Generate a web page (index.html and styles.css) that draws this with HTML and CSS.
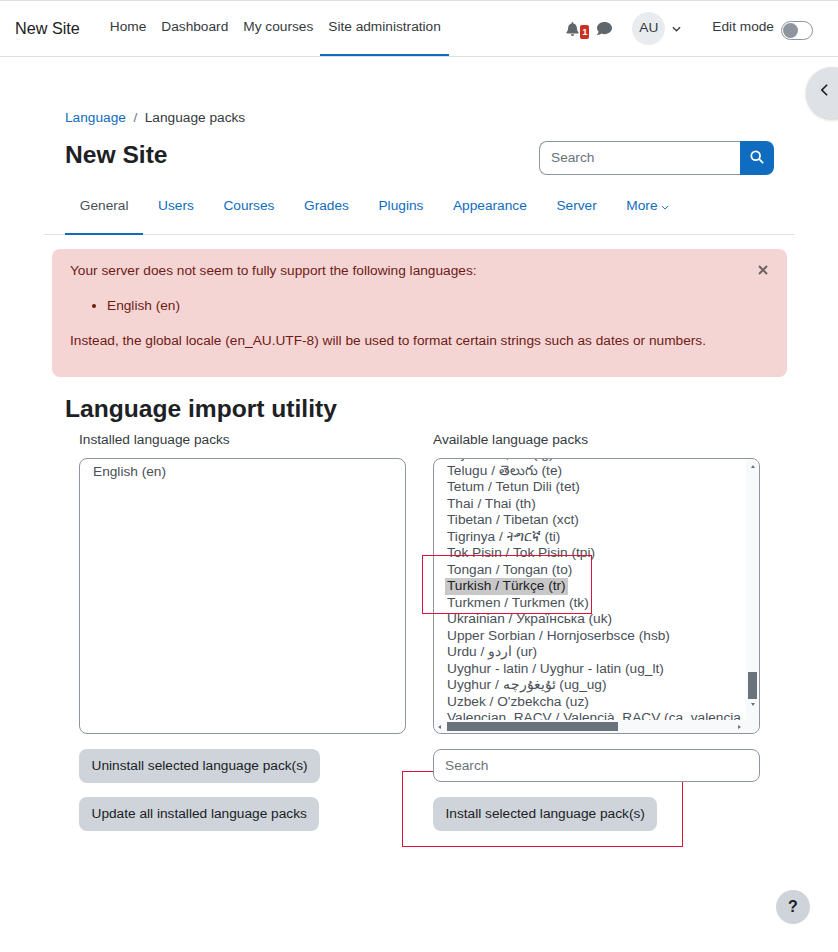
FILE: index.html
```html
<!DOCTYPE html>
<html lang="en">
<head>
  <meta charset="UTF-8">
  <meta name="viewport" content="width=device-width, initial-scale=1.0">
  <title>New Site: Language packs</title>
  <link rel="stylesheet" href="styles.css">
</head>
<body>
  <nav class="navbar">
    <a class="brand">New Site</a>
    <ul class="primary-nav">
      <li><a>Home</a></li>
      <li><a>Dashboard</a></li>
      <li><a>My courses</a></li>
      <li class="active"><a>Site administration</a></li>
    </ul>
    <div class="user-nav">
      <span class="icon-bell">
        <svg viewBox="0 0 448 512" width="13" height="14"><path fill="#5f666c" d="M224 512c35.32 0 63.97-28.65 63.97-64H160.03c0 35.35 28.65 64 63.97 64zm215.39-149.71c-19.32-20.76-55.47-51.99-55.47-154.29 0-77.7-54.48-139.9-127.94-155.16V32c0-17.67-14.32-32-31.98-32s-31.98 14.33-31.98 32v20.84C118.56 68.1 64.08 130.3 64.08 208c0 102.3-36.15 133.53-55.47 154.29-6 6.45-8.66 14.16-8.61 21.71.11 16.4 12.98 32 32.1 32h383.8c19.12 0 32-15.6 32.1-32 .05-7.55-2.61-15.27-8.61-21.71z"/></svg>
        <span class="badge">1</span>
      </span>
      <svg class="icon-msg" viewBox="0 0 512 512" width="15" height="15"><path fill="#5f666c" d="M256 32C114.6 32 0 125.1 0 240c0 49.6 21.4 95 57 130.7C44.5 421.1 2.7 466 2.2 466.5c-2.2 2.3-2.8 5.7-1.5 8.7S4.8 480 8 480c66.3 0 116-31.8 140.6-51.4 32.7 12.3 69 19.4 107.4 19.4 141.4 0 256-93.1 256-208S397.4 32 256 32z"/></svg>
      <span class="avatar">AU</span>
      <svg class="icon-caret" viewBox="0 0 10 6" width="9" height="6"><path d="M1 1l4 4 4-4" fill="none" stroke="#343a40" stroke-width="1.4"/></svg>
      <span class="edit-label">Edit mode</span>
      <span class="toggle"><span class="knob"></span></span>
    </div>
  </nav>

  <button class="drawer-toggle">
    <svg viewBox="0 0 10 16" width="9" height="14"><path d="M8 2L2 8l6 6" fill="none" stroke="#1d2125" stroke-width="2"/></svg>
  </button>

  <main class="page">
    <ol class="breadcrumb">
      <li><a>Language</a></li>
      <li class="sep">/</li>
      <li>Language packs</li>
    </ol>

    <div class="page-head">
      <h2>New Site</h2>
      <form class="search-group">
        <input class="search-input" placeholder="Search">
        <button class="search-btn" type="button">
          <svg viewBox="0 0 16 16" width="14" height="14"><circle cx="6.5" cy="6.5" r="5" fill="none" stroke="#fff" stroke-width="2"/><path d="M10.5 10.5L15 15" stroke="#fff" stroke-width="2"/></svg>
        </button>
      </form>
    </div>

    <ul class="tabs">
      <li class="active"><a>General</a></li>
      <li><a>Users</a></li>
      <li><a>Courses</a></li>
      <li><a>Grades</a></li>
      <li><a>Plugins</a></li>
      <li><a>Appearance</a></li>
      <li><a>Server</a></li>
      <li><a>More <svg viewBox="0 0 10 6" width="8" height="5"><path d="M1 1l4 4 4-4" fill="none" stroke="#0f6cbf" stroke-width="1.2"/></svg></a></li>
    </ul>

    <div class="alert">
      <svg class="alert-close" viewBox="0 0 10 10" width="10" height="10"><path d="M1 1l8 8M9 1l-8 8" stroke="#6c6566" stroke-width="2"/></svg>
      <p>Your server does not seem to fully support the following languages:</p>
      <ul>
        <li>English (en)</li>
      </ul>
      <p>Instead, the global locale (en_AU.UTF-8) will be used to format certain strings such as dates or numbers.</p>
    </div>

    <h2 class="section-title">Language import utility</h2>

    <div class="import-grid">
      <div class="col">
        <label>Installed language packs</label>
        <div class="listbox">
          <div class="options options-plain">
            <div class="option">English (en)</div>
          </div>
        </div>
        <button class="btn">Uninstall selected language pack(s)</button>
        <button class="btn">Update all installed language packs</button>
      </div>

      <div class="col">
        <label>Available language packs</label>
        <div class="listbox listbox-scroll">
          <div class="options">
            <div class="options-inner">
              <div class="option">Tajik / Тоҷикӣ (tg)</div>
              <div class="option">Telugu / తెలుగు (te)</div>
              <div class="option">Tetum / Tetun Dili (tet)</div>
              <div class="option">Thai / Thai (th)</div>
              <div class="option">Tibetan / Tibetan (xct)</div>
              <div class="option">Tigrinya / ትግርኛ (ti)</div>
              <div class="option">Tok Pisin / Tok Pisin (tpi)</div>
              <div class="option">Tongan / Tongan (to)</div>
              <div class="option"><span class="selected">Turkish / Türkçe (tr)</span></div>
              <div class="option">Turkmen / Turkmen (tk)</div>
              <div class="option">Ukrainian / Українська (uk)</div>
              <div class="option">Upper Sorbian / Hornjoserbsce (hsb)</div>
              <div class="option">Urdu / اردو (ur)</div>
              <div class="option">Uyghur - latin / Uyghur - latin (ug_lt)</div>
              <div class="option">Uyghur / ئۇيغۇرچە (ug_ug)</div>
              <div class="option">Uzbek / O'zbekcha (uz)</div>
              <div class="option">Valencian_RACV / Valencià_RACV (ca_valencia)</div>
            </div>
          </div>
          <div class="vbar">
            <span class="arrow-up"></span>
            <span class="vthumb"></span>
            <span class="arrow-down"></span>
          </div>
          <div class="hbar">
            <span class="arrow-left"></span>
            <span class="hthumb"></span>
            <span class="arrow-right"></span>
          </div>
          <div class="corner"></div>
          <div class="highlight highlight-list"></div>
        </div>
        <div class="search-wrap">
          <div class="highlight highlight-install"></div>
          <input class="field" placeholder="Search">
        </div>
        <button class="btn btn-install">Install selected language pack(s)</button>
      </div>
    </div>
  </main>

  <button class="help-btn">?</button>
</body>
</html>
```

FILE: styles.css
```css
body {
  margin: 0;
  font-family: "Liberation Sans", Arial, sans-serif;
  font-size: 13.69px;
  line-height: 1.5;
  color: #1d2125;
  background: #fff;
  min-height: 952px;
  position: relative;
  overflow: hidden;
}

a {
  color: #0f6cbf;
  text-decoration: none;
}

ul, ol {
  list-style: none;
  margin: 0;
  padding: 0;
}

/* Top navigation */
.navbar {
  height: 55px;
  display: flex;
  align-items: stretch;
  border-top: 1px solid #dee2e6;
  border-bottom: 1px solid #dee2e6;
  padding: 0 25px 0 15px;
}

.brand {
  color: #1d2125;
  font-size: 16.2px;
  align-self: center;
  margin-right: 22.5px;
}

.primary-nav {
  display: flex;
}

.primary-nav li {
  display: flex;
  align-items: center;
  padding: 0 7.5px;
  border-bottom: 2px solid transparent;
}

.primary-nav a {
  color: #343a40;
}

.primary-nav li.active {
  border-bottom-color: #0f6cbf;
  padding: 0 8px;
  margin-left: -0.5px;
}

.user-nav {
  margin-left: auto;
  display: flex;
  align-items: center;
}

.icon-bell {
  position: relative;
  display: flex;
  margin-right: 18px;
}

.badge {
  position: absolute;
  left: 14px;
  top: 3px;
  background: #ca3120;
  color: #fff;
  font-size: 9.5px;
  font-weight: bold;
  line-height: 14px;
  width: 9px;
  height: 14px;
  border-radius: 2px;
  text-align: center;
}

.avatar {
  width: 33px;
  height: 33px;
  border-radius: 50%;
  background: #e9ecef;
  color: #343a40;
  display: flex;
  align-items: center;
  justify-content: center;
  margin-left: 20px;
}

.icon-caret {
  margin-left: 7px;
}

.edit-label {
  margin-left: 31px;
  padding-bottom: 2px;
  color: #343a40;
}

.toggle {
  width: 29px;
  height: 17px;
  border: 1px solid #8f959e;
  border-radius: 10px;
  margin-left: 7px;
  margin-top: 4px;
  display: flex;
  align-items: center;
  padding-left: 1px;
}

.knob {
  width: 15px;
  height: 15px;
  border-radius: 50%;
  background: #8f959e;
}

.drawer-toggle {
  position: absolute;
  left: 806px;
  top: 67px;
  width: 52px;
  height: 52px;
  border: none;
  border-radius: 50%;
  background: #dee2e6;
  box-shadow: 0 1px 3px rgba(0,0,0,0.2);
  padding: 0 0 4px 14px;
  text-align: left;
}

/* Page */
.page {
  width: 709px;
  margin-left: 65px;
}

.breadcrumb {
  display: flex;
  padding-top: 51px;
  color: #343a40;
}

.sep {
  color: #6a737b;
  padding: 0 7.5px;
}

.page-head {
  display: flex;
  justify-content: space-between;
  height: 47.5px;
}

.page-head h2 {
  margin: 0;
  padding-top: 11.5px;
}

h2 {
  font-size: 24.6px;
  line-height: 1.2;
  font-weight: bold;
}

.search-group {
  display: flex;
  margin-top: 12.5px;
  height: 34px;
}

.search-input {
  width: 201px;
  box-sizing: border-box;
  border: 1px solid #8f959e;
  border-right: none;
  border-radius: 8px 0 0 8px;
  padding: 0 11px;
  font: inherit;
  outline: none;
}

.search-btn {
  width: 34px;
  border: none;
  background: #0f6cbf;
  border-radius: 0 8px 8px 0;
  padding: 0 0 2px;
  display: flex;
  align-items: center;
  justify-content: center;
}

input::placeholder {
  color: #6a737b;
}

.tabs {
  display: flex;
  margin: 0 -21px;
  padding-left: 21px;
  border-bottom: 1px solid #dee2e6;
  height: 58px;
}

.tabs li {
  padding: 20px 14.8px 0;
  margin-bottom: -1px;
  border-bottom: 2px solid transparent;
  box-sizing: border-box;
  height: 59px;
}

.tabs li.active {
  border-bottom-color: #0f6cbf;
}

.tabs li.active a {
  color: #495057;
}

.alert {
  position: relative;
  margin: 14px -13px 0;
  padding: 11.5px 18px 10.9px;
  background: #f5d5d3;
  color: #6e1b17;
  border-radius: 8px;
}

.alert p {
  margin: 0 0 15px;
}

.alert ul {
  list-style: disc;
  padding-left: 37px;
  margin-bottom: 14.4px;
}

.alert-close {
  position: absolute;
  right: 19px;
  top: 16px;
}

.section-title {
  margin: 17px 0 0;
}

/* Import form */
.import-grid {
  display: grid;
  grid-template-columns: 327px 327px;
  column-gap: 27px;
  padding-left: 14px;
  margin-top: 6px;
}

.col {
  display: flex;
  flex-direction: column;
  align-items: flex-start;
}

.col label {
  color: #343a40;
  margin-bottom: 8px;
}

.listbox {
  position: relative;
  width: 100%;
  height: 276px;
  box-sizing: border-box;
  border: 1px solid #8f959e;
  border-radius: 8px;
  background: #fff;
  color: #495057;
  margin-bottom: 15px;
}

.listbox-scroll {
  display: grid;
  grid-template-columns: 1fr 13px;
  grid-template-rows: 1fr 13px;
}

.options {
  overflow: hidden;
  min-width: 0;
}

.options-plain {
  padding-top: 5px;
}

.options-inner {
  margin-top: -13px;
  margin-right: 5px;
  overflow: hidden;
}

.option {
  height: 16.5px;
  line-height: 16.5px;
  padding-left: 13px;
  white-space: nowrap;
}

.selected {
  display: inline-block;
  background: #c8c8c8;
  color: #1d2125;
  padding: 0 2px;
  margin-left: -2px;
  height: 17px;
}

.vbar {
  background: #f8f9fa;
  display: flex;
  flex-direction: column;
  align-items: center;
  padding: 6px 0 14px;
  border-radius: 0 8px 0 0;
}

.vthumb {
  width: 9px;
  height: 27px;
  background: #6a737b;
  margin-top: auto;
  margin-bottom: 4px;
}

.arrow-up, .arrow-down, .arrow-left, .arrow-right {
  width: 0;
  height: 0;
  border: 2.5px solid transparent;
}

.arrow-up { border-bottom: 3px solid #6a737b; border-top: none; }
.arrow-down { border-top: 3px solid #6a737b; border-bottom: none; }
.arrow-left { border-right: 3px solid #6a737b; border-left: none; margin: 0 6px 0 4px; }
.arrow-right { border-left: 3px solid #6a737b; border-right: none; margin-left: auto; margin-right: 5px; }

.hbar {
  background: #f8f9fa;
  display: flex;
  align-items: center;
  border-radius: 0 0 0 8px;
}

.hthumb {
  width: 171px;
  height: 9px;
  background: #6a737b;
}

.corner {
  background: #f8f9fa;
  border-radius: 0 0 8px 0;
}

.highlight {
  position: absolute;
  border: 1px solid #dc143c;
  box-sizing: border-box;
  pointer-events: none;
}

.highlight-list {
  left: -12px;
  top: 96px;
  width: 170px;
  height: 59px;
}

.search-wrap {
  position: relative;
  width: 100%;
  margin-bottom: 15px;
}

.highlight-install {
  left: -31px;
  top: 22px;
  width: 281px;
  height: 76px;
}

.field {
  position: relative;
  display: block;
  width: 100%;
  height: 33px;
  box-sizing: border-box;
  border: 1px solid #8f959e;
  border-radius: 8px;
  padding: 0 11px;
  font: inherit;
  background: #fff;
  outline: none;
}

.btn {
  font: inherit;
  color: #1d2125;
  background: #ced4da;
  border: none;
  border-radius: 8px;
  height: 34px;
  padding: 0 12.5px;
  margin-bottom: 14px;
  white-space: nowrap;
}

.btn-install {
  position: relative;
}

.help-btn {
  position: absolute;
  left: 776px;
  top: 890px;
  width: 34px;
  height: 34px;
  border: none;
  border-radius: 50%;
  background: #ced4da;
  color: #1d2125;
  font: bold 16px "Liberation Sans", Arial, sans-serif;
  padding: 0;
}
```
